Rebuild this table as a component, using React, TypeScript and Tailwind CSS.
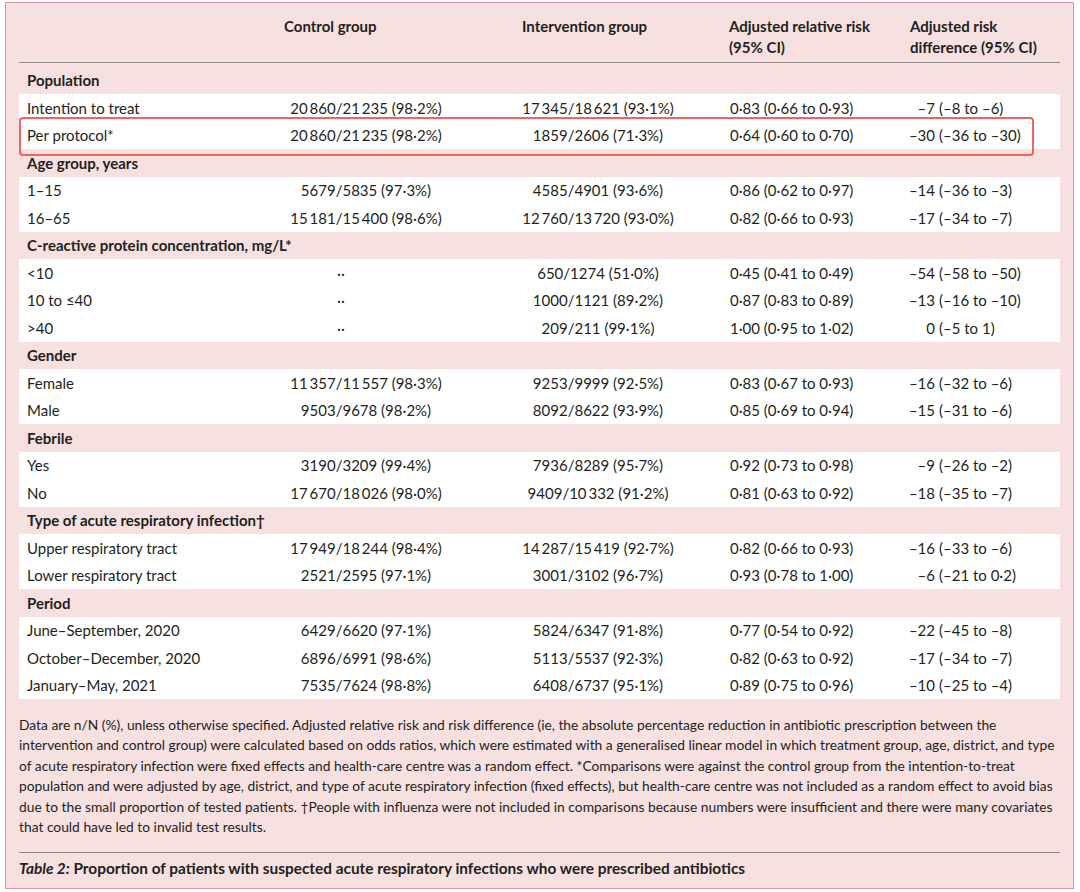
import React from "react";

type Row = [string, string, string, string, string, string];
type Section = { title: string; rows: Row[] };

const T = "\u2009";

const sections: Section[] = [
  {
    title: "Population",
    rows: [
      ["Intention to treat", `20${T}860/21${T}235 (98·2%)`, `17${T}345/18${T}621 (93·1%)`, "0·83 (0·66 to 0·93)", "–7", "(–8 to –6)"],
      ["Per protocol*", `20${T}860/21${T}235 (98·2%)`, "1859/2606 (71·3%)", "0·64 (0·60 to 0·70)", "–30", "(–36 to –30)"],
    ],
  },
  {
    title: "Age group, years",
    rows: [
      ["1–15", "5679/5835 (97·3%)", "4585/4901 (93·6%)", "0·86 (0·62 to 0·97)", "–14", "(–36 to –3)"],
      ["16–65", `15${T}181/15${T}400 (98·6%)`, `12${T}760/13${T}720 (93·0%)`, "0·82 (0·66 to 0·93)", "–17", "(–34 to –7)"],
    ],
  },
  {
    title: "C-reactive protein concentration, mg/L*",
    rows: [
      ["<10", "··", "650/1274 (51·0%)", "0·45 (0·41 to 0·49)", "–54", "(–58 to –50)"],
      ["10 to ≤40", "··", "1000/1121 (89·2%)", "0·87 (0·83 to 0·89)", "–13", "(–16 to –10)"],
      [">40", "··", "209/211 (99·1%)", "1·00 (0·95 to 1·02)", "0", "(–5 to 1)"],
    ],
  },
  {
    title: "Gender",
    rows: [
      ["Female", `11${T}357/11${T}557 (98·3%)`, "9253/9999 (92·5%)", "0·83 (0·67 to 0·93)", "–16", "(–32 to –6)"],
      ["Male", "9503/9678 (98·2%)", "8092/8622 (93·9%)", "0·85 (0·69 to 0·94)", "–15", "(–31 to –6)"],
    ],
  },
  {
    title: "Febrile",
    rows: [
      ["Yes", "3190/3209 (99·4%)", "7936/8289 (95·7%)", "0·92 (0·73 to 0·98)", "–9", "(–26 to –2)"],
      ["No", `17${T}670/18${T}026 (98·0%)`, `9409/10${T}332 (91·2%)`, "0·81 (0·63 to 0·92)", "–18", "(–35 to –7)"],
    ],
  },
  {
    title: "Type of acute respiratory infection†",
    rows: [
      ["Upper respiratory tract", `17${T}949/18${T}244 (98·4%)`, `14${T}287/15${T}419 (92·7%)`, "0·82 (0·66 to 0·93)", "–16", "(–33 to –6)"],
      ["Lower respiratory tract", "2521/2595 (97·1%)", "3001/3102 (96·7%)", "0·93 (0·78 to 1·00)", "–6", "(–21 to 0·2)"],
    ],
  },
  {
    title: "Period",
    rows: [
      ["June–September, 2020", "6429/6620 (97·1%)", "5824/6347 (91·8%)", "0·77 (0·54 to 0·92)", "–22", "(–45 to –8)"],
      ["October–December, 2020", "6896/6991 (98·6%)", "5113/5537 (92·3%)", "0·82 (0·63 to 0·92)", "–17", "(–34 to –7)"],
      ["January–May, 2021", "7535/7624 (98·8%)", "6408/6737 (95·1%)", "0·89 (0·75 to 0·96)", "–10", "(–25 to –4)"],
    ],
  },
];

const footLines = [
  "Data are n/N (%), unless otherwise specified. Adjusted relative risk and risk difference (ie, the absolute percentage reduction in antibiotic prescription between the",
  "intervention and control group) were calculated based on odds ratios, which were estimated with a generalised linear model in which treatment group, age, district, and type",
  "of acute respiratory infection were fixed effects and health-care centre was a random effect. *Comparisons were against the control group from the intention-to-treat",
  "population and were adjusted by age, district, and type of acute respiratory infection (fixed effects), but health-care centre was not included as a random effect to avoid bias",
  "due to the small proportion of tested patients. †People with influenza were not included in comparisons because numbers were insufficient and there were many covariates",
  "that could have led to invalid test results.",
];

const grid = "grid grid-cols-[231px_232px_232px_181px_165px]";

function DataRow({ r, highlight }: { r: Row; highlight?: boolean }) {
  return (
    <div className={`${grid} relative h-[27.5px] items-center bg-white`}>
      <div className="pl-[8px] whitespace-nowrap">{r[0]}</div>
      {r[1] === "··" ? (
        <div className="pl-[87px] text-left">··</div>
      ) : (
        <div className="text-center whitespace-nowrap">{r[1]}</div>
      )}
      <div className="text-center whitespace-nowrap">{r[2]}</div>
      <div className="pl-[16px] whitespace-nowrap">{r[3]}</div>
      <div className="flex whitespace-nowrap">
        <span className="inline-block w-[40px] text-right">{r[4]}</span>
        <span className="ml-[4px]">{r[5]}</span>
      </div>
      {highlight && (
        <div className="pointer-events-none absolute -top-[5px] -bottom-[7px] left-0 right-[26px] rounded-[4px] border-2 border-[#f2625e]" />
      )}
    </div>
  );
}

export default function App() {
  return (
    <div className="h-[892px] w-[1080px] bg-white pt-[2px] pl-[5px] text-[#231f20] font-['Lato',sans-serif]">
      <div className="h-[887px] w-[1069px] border border-[#dc93a6] bg-[#f6e1e0] px-[13px]">
        {/* header */}
        <div className={`${grid} border-b border-[#8e8a8a] pt-[13px] pb-[4px] text-[15px] font-bold leading-[21px]`}>
          <div />
          <div className="pl-[34px]">Control group</div>
          <div className="pl-[40px]">Intervention group</div>
          <div className="pl-[15px]">
            Adjusted relative risk
            <br />
            (95% CI)
          </div>
          <div className="pl-[15px]">
            Adjusted risk
            <br />
            difference (95% CI)
          </div>
        </div>

        {/* body */}
        <div className="mt-[3.5px] text-[15px]">
          {sections.map((s) => (
            <div key={s.title}>
              <div className="flex h-[27.5px] items-center pl-[8px] font-bold">{s.title}</div>
              {s.rows.map((r) => (
                <DataRow key={r[0]} r={r} highlight={r[0] === "Per protocol*"} />
              ))}
            </div>
          ))}
        </div>

        {/* footnote */}
        <div className="mt-[15.5px] text-[13.8px] leading-[20.6px]">
          {footLines.map((l, i) => (
            <div key={i} className="whitespace-nowrap">
              {l}
            </div>
          ))}
        </div>

        <div className="mt-[14px] border-t border-[#8e8a8a] pt-[5px] text-[15.4px] font-bold leading-[21px]">
          <span className="italic">Table 2:</span> Proportion of patients with suspected acute respiratory infections who were prescribed antibiotics
        </div>
      </div>
    </div>
  );
}
